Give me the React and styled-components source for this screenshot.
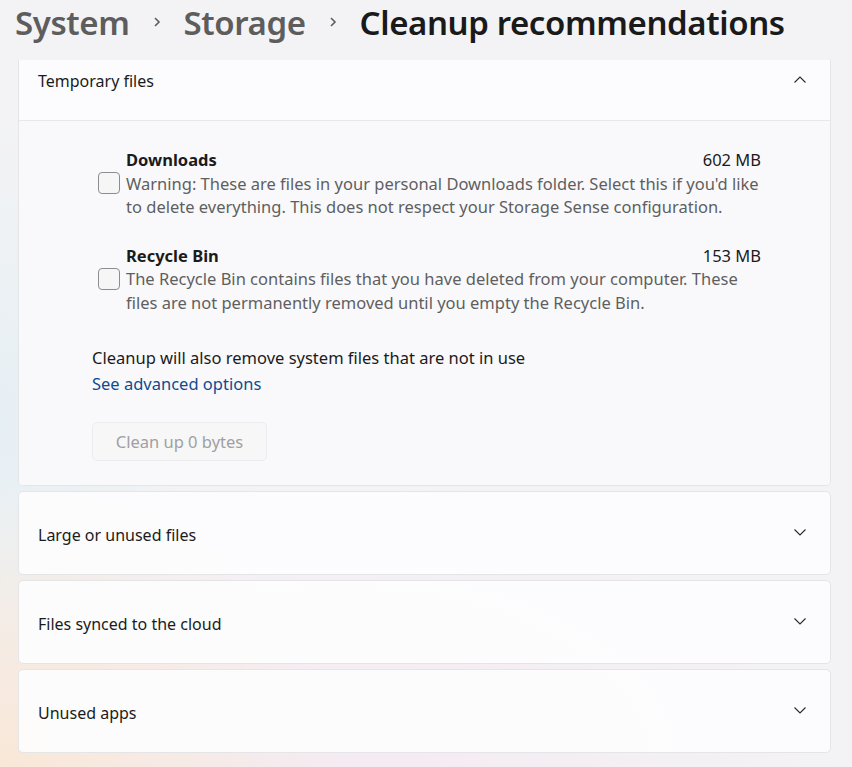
import React from "react";
import styled, { createGlobalStyle } from "styled-components";

const Global = createGlobalStyle`
  html, body { margin: 0; padding: 0; }
  body {
    width: 852px;
    height: 767px;
    overflow: hidden;
    font-family: "Noto Sans", "Open Sans", sans-serif;
    color: #1b1b1b;
    background:
      radial-gradient(ellipse 340px 280px at 0% 100%, rgba(250, 230, 210, 0.85), rgba(250,230,210,0) 100%),
      radial-gradient(ellipse 520px 300px at 40% 100%, rgba(246, 230, 240, 0.65), rgba(246,230,240,0) 100%),
      radial-gradient(ellipse 200px 300px at 0% 55%, rgba(226, 238, 244, 0.75), rgba(226,238,244,0) 100%),
      #f3f3f5;
  }
`;

const Page = styled.div`
  display: flex;
  flex-direction: column;
  padding: 0 21px 0 18px;
`;

const Breadcrumb = styled.h1`
  display: flex;
  align-items: center;
  height: 44px;
  margin: 0 0 16px -3px;
  font-family: "Noto Sans", sans-serif;
  font-size: 33px;
  font-weight: 600;
  letter-spacing: -0.4px;
  white-space: nowrap;
`;

const Crumb = styled.span`
  color: ${(p) => (p.$current ? "#1a1a1a" : "#5d5d5d")};
`;

const Sep = styled.span`
  display: flex;
  align-items: center;
  justify-content: center;
  width: 54px;
`;

const Cards = styled.div`
  display: flex;
  flex-direction: column;
  gap: 5px;
`;

const Card = styled.section`
  background: rgba(253, 253, 254, 0.92);
  border: 1px solid #e5e5e8;
  border-radius: 5px;
  ${(p) => p.$top && "border-top: none; border-top-left-radius: 0; border-top-right-radius: 0;"}
  overflow: hidden;
`;

const CardHeader = styled.div`
  display: flex;
  align-items: center;
  justify-content: space-between;
  height: ${(p) => p.$h}px;
  padding: 0 22px 0 19px;
  font-size: 16px;
  color: #1b1b1b;
  box-sizing: border-box;
  ${(p) => p.$divided && "border-bottom: 1px solid #e8e8ea;"}
  ${(p) => p.$shift && `padding-bottom: ${p.$shift}px;`}
  ${(p) => p.$drop && `padding-top: ${p.$drop}px;`}
`;

const Chevron = styled.svg`
  width: 16px;
  height: 16px;
  flex: none;
  ${(p) => p.$lift && `margin-top: -${p.$lift}px;`}
`;

const CardBody = styled.div`
  display: flex;
  flex-direction: column;
  background: #f9f9fb;
  padding: 27px 69px 24px 73px;
`;

const Options = styled.div`
  display: flex;
  flex-direction: column;
  gap: 25px;
  padding-left: 6px;
  margin-bottom: 31px;
`;

const OptionRow = styled.label`
  display: flex;
  align-items: center;
  gap: 6px;
`;

const Box = styled.span`
  width: 22px;
  height: 22px;
  box-sizing: border-box;
  border: 1px solid #8d8d8f;
  border-radius: 4px;
  background: #f6f6f7;
  flex: none;
`;

const OptionText = styled.div`
  flex: 1;
  display: flex;
  flex-direction: column;
  font-size: 16.5px;
  line-height: 23.5px;
`;

const OptionHead = styled.div`
  display: flex;
  justify-content: space-between;
  color: #1b1b1b;
`;

const OptionTitle = styled.span`
  font-weight: 700;
`;

const OptionDesc = styled.div`
  color: #5f5f5f;
`;

const Note = styled.div`
  font-size: 16.5px;
  line-height: 26px;
  color: #1b1b1b;
`;

const Link = styled.a`
  font-size: 16.5px;
  line-height: 26px;
  color: #0f4c8f;
  text-decoration: none;
  width: fit-content;
`;

const Button = styled.button`
  margin-top: 25px;
  width: 175px;
  height: 39px;
  border: 1px solid #ececee;
  border-radius: 5px;
  background: #f7f7f8;
  color: #a0a0a2;
  font-family: inherit;
  font-size: 16.5px;
  text-align: center;
  padding: 0;
`;

const Up = () => (
  <Chevron viewBox="0 0 16 16" $lift={3}>
    <path d="M2.5 10.5 L8 5 L13.5 10.5" fill="none" stroke="#2a2a2a" strokeWidth="1.1" />
  </Chevron>
);

const Down = () => (
  <Chevron viewBox="0 0 16 16" $lift={6}>
    <path d="M2.5 5.5 L8 11 L13.5 5.5" fill="none" stroke="#2a2a2a" strokeWidth="1.1" />
  </Chevron>
);

const BreadSep = () => (
  <Sep>
    <svg width="12" height="14" viewBox="0 0 12 14">
      <path d="M4 3 L8 7 L4 11" fill="none" stroke="#5d5d5d" strokeWidth="1.6" />
    </svg>
  </Sep>
);

const options = [
  {
    title: "Downloads",
    size: "602 MB",
    desc: "Warning: These are files in your personal Downloads folder. Select this if you'd like to delete everything. This does not respect your Storage Sense configuration.",
  },
  {
    title: "Recycle Bin",
    size: "153 MB",
    desc: "The Recycle Bin contains files that you have deleted from your computer. These files are not permanently removed until you empty the Recycle Bin.",
  },
];

const collapsed = ["Large or unused files", "Files synced to the cloud", "Unused apps"];

export default function App() {
  return (
    <>
      <Global />
      <Page>
        <Breadcrumb>
          <Crumb>System</Crumb>
          <BreadSep />
          <Crumb>Storage</Crumb>
          <BreadSep />
          <Crumb $current>Cleanup recommendations</Crumb>
        </Breadcrumb>
        <Cards>
          <Card $top>
            <CardHeader $h={61} $divided $shift={18}>
              <span>Temporary files</span>
              <Up />
            </CardHeader>
            <CardBody>
              <Options>
                {options.map((o) => (
                  <OptionRow key={o.title}>
                    <Box />
                    <OptionText>
                      <OptionHead>
                        <OptionTitle>{o.title}</OptionTitle>
                        <span>{o.size}</span>
                      </OptionHead>
                      <OptionDesc>{o.desc}</OptionDesc>
                    </OptionText>
                  </OptionRow>
                ))}
              </Options>
              <Note>Cleanup will also remove system files that are not in use</Note>
              <Link href="#">See advanced options</Link>
              <Button disabled>Clean up 0 bytes</Button>
            </CardBody>
          </Card>
          {collapsed.map((t) => (
            <Card key={t}>
              <CardHeader $h={82} $drop={4}>
                <span>{t}</span>
                <Down />
              </CardHeader>
            </Card>
          ))}
        </Cards>
      </Page>
    </>
  );
}
